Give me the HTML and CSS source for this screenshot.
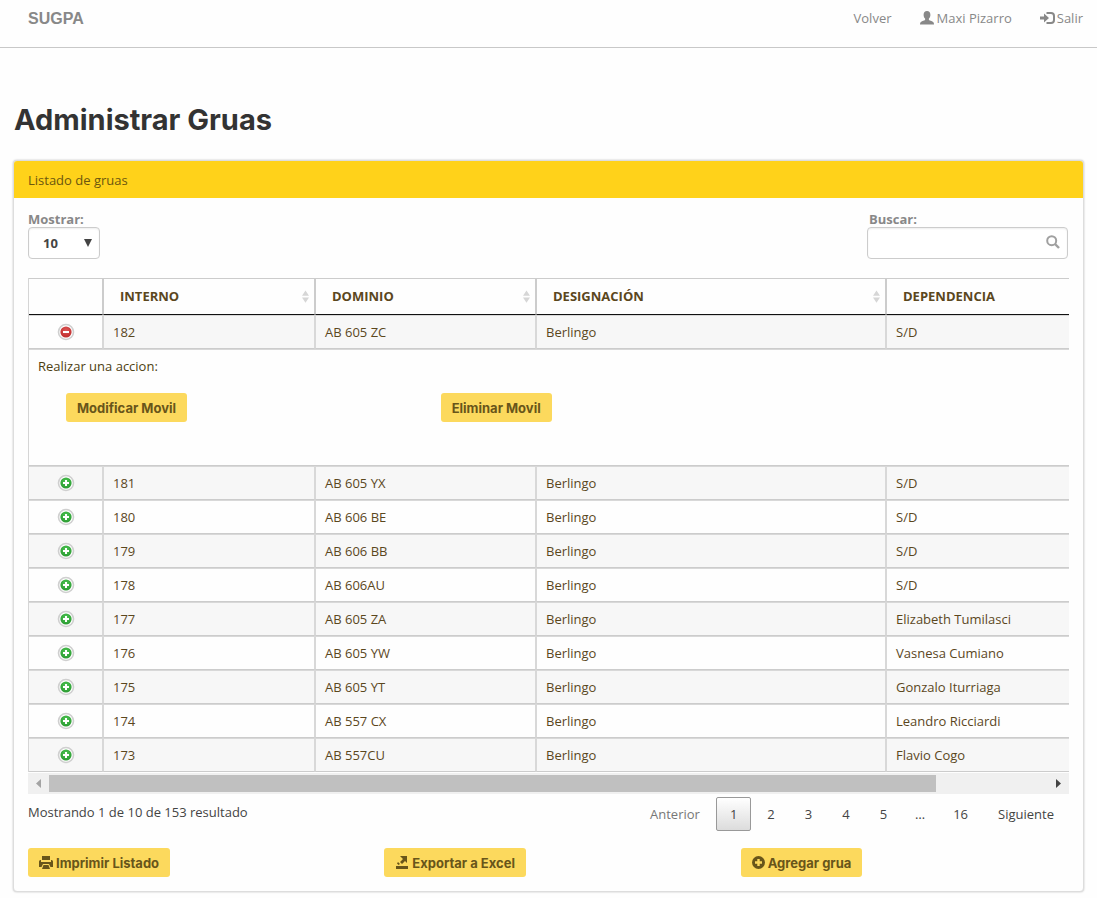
FILE: index.html
```html
<!DOCTYPE html>
<html lang="es">
<head>
<meta charset="utf-8">
<title>SUGPA - Administrar Gruas</title>
<link rel="stylesheet" href="styles.css">
</head>
<body>
<svg class="defs" aria-hidden="true">
  <defs>
    <radialGradient id="green" cx="50%" cy="35%" r="65%"><stop offset="0" stop-color="#4cc552"/><stop offset="1" stop-color="#2a9a31"/></radialGradient>
    <radialGradient id="red" cx="50%" cy="35%" r="65%"><stop offset="0" stop-color="#dc5757"/><stop offset="1" stop-color="#bf2c2c"/></radialGradient>
    <symbol id="open" viewBox="0 0 18 18"><circle cx="9" cy="9" r="7.5" fill="#fff" stroke="#cfcfcf" stroke-width="1.6"/><circle cx="9" cy="9" r="5.6" fill="url(#green)"/><path d="M6 9h6M9 6v6" stroke="#fff" stroke-width="2"/></symbol>
    <symbol id="close" viewBox="0 0 18 18"><circle cx="9" cy="9" r="7.5" fill="#fff" stroke="#cfcfcf" stroke-width="1.6"/><circle cx="9" cy="9" r="5.6" fill="url(#red)"/><path d="M6 9h6" stroke="#fff" stroke-width="2"/></symbol>
    <symbol id="sort" viewBox="0 0 8 14"><path d="M4 0l4 6H0zM0 8h8l-4 6z" fill="#d6d6d6"/></symbol>
  </defs>
</svg>
<nav class="navbar">
  <a class="brand" href="#">SUGPA</a>
  <div class="nav-links">
    <a href="#">Volver</a>
    <a href="#"><svg width="14" height="14" viewBox="0 0 14 14" fill="currentColor"><path d="M7 0c2.2 0 3.4 1.5 3.4 3.700 0 1.700-.6 3-1.500 3.900v1.500c.9.600 4.300 1.500 4.700 2.500.3.600.4 1.400.4 2H0c0-.6.100-1.400.4-2 .4-1 3.800-1.900 4.700-2.500V7.600C4.200 6.700 3.600 5.400 3.600 3.700 3.600 1.500 4.800 0 7 0z"/></svg> Maxi Pizarro</a>
    <a class="logout" href="#"><svg width="15" height="14" viewBox="0 0 15 14"><path d="M0 5.500h4V2.500L9 7l-5 4.500v-3H0z" fill="currentColor"/><path d="M6.500 2h4.500q3 0 3 3v4q0 3-3 3H6.500" fill="none" stroke="currentColor" stroke-width="2"/></svg> Salir</a>
  </div>
</nav>
<main class="content">
  <h1>Administrar Gruas</h1>
  <section class="panel">
    <header class="panel-heading">Listado de gruas</header>
    <div class="panel-body">
      <div class="filters">
        <div class="field"><label for="count">Mostrar:</label>
          <span class="select-box"><select id="count"><option>10</option><option>25</option><option>50</option></select><svg width="8" height="8" viewBox="0 0 8 8"><path d="M0 0h8L4 8z" fill="#444"/></svg></span>
        </div>
        <div class="field search"><label for="search">Buscar:</label>
          <span class="search-box"><input id="search" type="text"><svg width="14" height="14" viewBox="0 0 14 14" fill="none" stroke="#a0a0a0"><circle cx="5.700" cy="5.700" r="4.500" stroke-width="2"/><path d="M9 9l4 4" stroke-width="2.400"/></svg></span>
        </div>
      </div>
      <div class="table-scroll">
        <table>
          <colgroup><col class="c-toggle"><col class="c-interno"><col class="c-dominio"><col class="c-desig"><col class="c-dep"></colgroup>
          <thead><tr><th></th>
            <th><div>INTERNO<svg width="7" height="13"><use href="#sort"/></svg></div></th>
            <th><div>DOMINIO<svg width="7" height="13"><use href="#sort"/></svg></div></th>
            <th><div>DESIGNACIÓN<svg width="7" height="13"><use href="#sort"/></svg></div></th>
            <th><div>DEPENDENCIA<svg width="7" height="13"><use href="#sort"/></svg></div></th></tr></thead>
          <tbody>
            <tr class="shown"><td><button class="toggle" aria-label="Cerrar"><svg width="18" height="18"><use href="#close"/></svg></button></td><td>182</td><td>AB 605 ZC</td><td>Berlingo</td><td>S/D</td></tr>
            <tr class="detail"><td colspan="5"><p>Realizar una accion:</p><div class="actions"><div><button class="btn">Modificar Movil</button></div><div><button class="btn">Eliminar Movil</button></div></div></td></tr>
            <tr class="odd"><td><button class="toggle" aria-label="Abrir"><svg width="18" height="18"><use href="#open"/></svg></button></td><td>181</td><td>AB 605 YX</td><td>Berlingo</td><td>S/D</td></tr>
            <tr><td><button class="toggle" aria-label="Abrir"><svg width="18" height="18"><use href="#open"/></svg></button></td><td>180</td><td>AB 606 BE</td><td>Berlingo</td><td>S/D</td></tr>
            <tr class="odd"><td><button class="toggle" aria-label="Abrir"><svg width="18" height="18"><use href="#open"/></svg></button></td><td>179</td><td>AB 606 BB</td><td>Berlingo</td><td>S/D</td></tr>
            <tr><td><button class="toggle" aria-label="Abrir"><svg width="18" height="18"><use href="#open"/></svg></button></td><td>178</td><td>AB 606AU</td><td>Berlingo</td><td>S/D</td></tr>
            <tr class="odd"><td><button class="toggle" aria-label="Abrir"><svg width="18" height="18"><use href="#open"/></svg></button></td><td>177</td><td>AB 605 ZA</td><td>Berlingo</td><td>Elizabeth Tumilasci</td></tr>
            <tr><td><button class="toggle" aria-label="Abrir"><svg width="18" height="18"><use href="#open"/></svg></button></td><td>176</td><td>AB 605 YW</td><td>Berlingo</td><td>Vasnesa Cumiano</td></tr>
            <tr class="odd"><td><button class="toggle" aria-label="Abrir"><svg width="18" height="18"><use href="#open"/></svg></button></td><td>175</td><td>AB 605 YT</td><td>Berlingo</td><td>Gonzalo Iturriaga</td></tr>
            <tr><td><button class="toggle" aria-label="Abrir"><svg width="18" height="18"><use href="#open"/></svg></button></td><td>174</td><td>AB 557 CX</td><td>Berlingo</td><td>Leandro Ricciardi</td></tr>
            <tr class="odd"><td><button class="toggle" aria-label="Abrir"><svg width="18" height="18"><use href="#open"/></svg></button></td><td>173</td><td>AB 557CU</td><td>Berlingo</td><td>Flavio Cogo</td></tr>
          </tbody>
        </table>
      </div>
      <div class="scrollbar">
        <svg width="21" height="21" viewBox="0 0 21 21"><path d="M13 6v9l-5-4.500z" fill="#a3a3a3"/></svg>
        <div class="track"><div class="thumb"></div></div>
        <svg width="21" height="21" viewBox="0 0 21 21"><path d="M8 6v9l5-4.500z" fill="#444"/></svg>
      </div>
      <div class="table-footer">
        <div class="info">Mostrando 1 de 10 de 153 resultado</div>
        <div class="pages">
          <a class="page previous" href="#">Anterior</a><a class="page current" href="#">1</a><a class="page" href="#">2</a><a class="page" href="#">3</a><a class="page" href="#">4</a><a class="page" href="#">5</a><span class="ellipsis">…</span><a class="page" href="#">16</a><a class="page" href="#">Siguiente</a>
        </div>
      </div>
      <div class="bottom-actions">
        <div><button class="btn"><svg width="14" height="13" viewBox="0 0 14 13" fill="currentColor"><path d="M3 0h8v4H3zM0 5.500Q0 4 1.500 4H2v2h10V4h.5Q14 4 14 5.500V11h-2.500L10 8H4l-1.500 3H0zM4.500 9h5l1.500 4H3z"/></svg>Imprimir Listado</button></div>
        <div><button class="btn"><svg width="14" height="13" viewBox="0 0 14 13" fill="currentColor"><path d="M1 10h12v3H1zM5 0h7v7L10 5 7 8 5 6l3-3zM3 6l2 2-1.500 1L2 7.500z"/></svg>Exportar a Excel</button></div>
        <div><button class="btn"><svg width="13" height="13" viewBox="0 0 13 13"><circle cx="6.500" cy="6.500" r="6.500" fill="currentColor"/><path d="M3 6.500h7M6.500 3v7" stroke="#fcd95d" stroke-width="2.400"/></svg>Agregar grua</button></div>
      </div>
    </div>
  </section>
</main>
</body>
</html>
```
FILE: styles.css
```css
* { box-sizing: border-box; }
body { margin: 0; background: #fefefe; color: #444; font: 13px/20px "Open Sans", sans-serif; }
.defs { position: absolute; width: 0; height: 0; }
a { color: inherit; text-decoration: none; }
button { font: inherit; cursor: pointer; }

.navbar { display: flex; justify-content: space-between; align-items: flex-start; height: 48px; padding: 8px 14px 0 28px; border-bottom: 1px solid #c8c8c8; color: #888; }
.brand { font: bold 16px/22px "Liberation Sans", sans-serif; }
.nav-links { display: flex; gap: 28px; }
.nav-links a { display: flex; align-items: center; gap: 3px; }
.nav-links .logout { gap: 2px; }

.content { padding: 0 13px 6px; }
h1 { margin: 58px 0 26px 1px; font: bold 29px/28px Inter, sans-serif; color: #333; }

.panel { border: 1px solid #ddd; border-radius: 4px; box-shadow: 0 0 2px #bbb; background: #fefefe; }
.panel-heading { padding: 9px 14px 8px; border-radius: 3px 3px 0 0; background: #ffd21a; color: #6b560f; }
.panel-body { padding: 14px; }

.filters { display: flex; justify-content: space-between; padding-right: 1px; }
.field { display: flex; flex-direction: column; }
.field label { color: #888; font-weight: bold; line-height: 15px; }
.search label { padding-left: 2px; }
.select-box, .search-box { display: flex; align-items: center; height: 32px; border: 1px solid #ccc; border-radius: 4px; background: #fff; box-shadow: inset 0 1px 2px #eee; }
.select-box { width: 72px; padding-right: 7px; }
.search-box { width: 201px; padding: 0 7px 2px; }
select, input { flex: 1; min-width: 0; height: 28px; border: 0; outline: 0; background: transparent; font: inherit; color: #444; appearance: none; }
select { padding: 0 0 0 14px; font-weight: bold; }

.table-scroll { overflow: hidden; margin-top: 19px; }
table { width: 100%; min-width: 1182px; table-layout: fixed; border-collapse: separate; border-spacing: 0; border-left: 1px solid #d5d5d5; color: #5b471d; }
.c-toggle { width: 74px; }
.c-interno { width: 212px; }
.c-dominio { width: 221px; }
.c-desig { width: 350px; }
th { height: 37px; padding: 0 5px 1px 17px; border: solid #ccc; border-width: 1px 1px 1px 0; border-bottom-color: #111; text-align: left; }
th + th { border-left-width: 1px; padding-left: 16px; }
th div { display: flex; align-items: center; justify-content: space-between; }
td { height: 34px; padding: 0 9px; border: 1px solid #d8d8d8; border-bottom-color: #ccc; border-left-width: 0; }
td + td { border-left-width: 1px; }
.odd td, .shown td + td { background: #f7f7f7; }
.detail td:first-child { height: 117px; padding: 6px 19px 0 9px; vertical-align: top; }
.detail p { margin: 0; color: #4d3e11; }
.actions { display: grid; grid-template-columns: repeat(3, 1fr); margin: 17px 0 0 28px; }
.toggle { display: block; margin: 0 auto; padding: 0; border: 0; background: none; }
.toggle svg { display: block; }

.scrollbar { display: flex; height: 21px; margin-top: 1px; background: #f0f0f0; }
.track { flex: 1; padding: 2px 0; }
.thumb { width: 88.8%; height: 17px; background: #c0c0c0; }

.table-footer { display: flex; justify-content: space-between; padding-top: 3px; }
.info { padding-top: 5px; }
.pages { display: flex; gap: 2px; padding-right: 1px; }
.page, .ellipsis { padding: 6px 13px; border: 1px solid transparent; border-radius: 2px; }
.ellipsis { padding: 6px 11px; }
.previous { color: #777; }
.current { border-color: #999; background: linear-gradient(#fff, #dcdcdc); }

.bottom-actions { display: grid; grid-template-columns: repeat(3, 1fr); margin: 17px -14px 0; }
.bottom-actions div { padding-left: 14px; }
.btn { display: inline-flex; align-items: center; gap: 3px; height: 29px; padding: 0 11px; border: 0; border-radius: 3px; background: #fcd95d; color: #68551a; font: bold 13px/20px Inter, sans-serif; }
```
